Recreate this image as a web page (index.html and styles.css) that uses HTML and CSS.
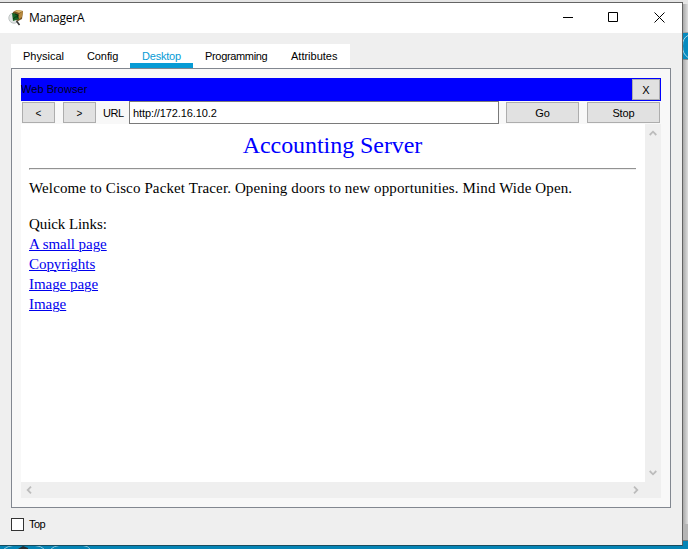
FILE: index.html
```html
<!DOCTYPE html>
<html lang="en">
<head>
<meta charset="utf-8">
<title>ManagerA</title>
<link rel="stylesheet" href="styles.css">
</head>
<body>
<svg class="backdrop" width="688" height="549" viewBox="0 0 688 549">
  <defs><linearGradient id="shade"><stop offset="0" stop-color="#a9a9a9"/><stop offset="1" stop-color="#dedede"/></linearGradient></defs>
  <rect width="688" height="549" fill="#e5e5e5"/>
  <rect x="683" y="4" width="5" height="545" fill="url(#shade)"/>
  <rect x="683" y="32" width="5" height="1" fill="#a0a0a0"/>
  <rect x="683" y="33" width="5" height="26" fill="#078bbf"/>
  <path d="M688 35.5Q682.5 38 682.5 46T688 57.5" fill="none" stroke="#a8d4e5"/>
  <rect x="683" y="59" width="5" height="1" fill="#858b8e"/>
  <rect x="683" y="524" width="5" height="16" fill="#b5b5b5"/>
  <rect x="683" y="540" width="5" height="1" fill="#777"/>
  <path d="M683 541h5v8H0v-4h683z" fill="#0584b5"/>
  <path d="M4 549Q8 546 13 545.500M35 545.500Q41 546 44 549M51 549Q54 546 59 545.500M83 545.500Q88 546 90 549" fill="none" stroke="#8dc5db"/>
  <path d="M18 549l5-3 5 2v1z" fill="#252d31"/>
</svg>
<main class="window">
  <header class="titlebar">
    <svg class="app-icon" width="17" height="17" viewBox="0 0 17 17">
      <circle cx="6" cy="9" r="5.200" fill="#e2e5e4" stroke="#bfc4c4"/>
      <path d="M5 3l4-2 6 1-1 8-4 2-5-2z" fill="#765321"/>
      <path d="M6 2l4-1 5 1-4 2z" fill="#dbb568"/>
      <path d="M11 5l4-3-1 6-3 2z" fill="#b88a3e"/>
      <path d="M4 4l5 1 2 5-6 2z" fill="#176526"/>
      <path d="M5 10l5-4M7 5l3 1-1 3" fill="none" stroke="#073b12"/>
      <path d="M8.500 12l3 4" stroke="#353535" stroke-width="1.600"/>
    </svg>
    <h1 class="title">ManagerA</h1>
    <svg class="controls" width="104" height="12" viewBox="0 0 104 12" fill="none" stroke="#000">
      <path d="M0 6.500h10M45.500 1.500h9v9h-9zM91.500 1.500l10 10M101.500 1.500l-10 10"/>
    </svg>
  </header>
  <nav class="tabs">
    <span class="tab physical">Physical</span><span class="tab config">Config</span><span class="tab active">Desktop</span><span class="tab programming">Programming</span><span class="tab attributes">Attributes</span>
  </nav>
  <section class="panel">
    <div class="browser-title"><span>Web Browser</span><button class="close">X</button></div>
    <div class="toolbar">
      <button class="nav-button">&lt;</button><button class="nav-button forward">&gt;</button>
      <label class="url-label">URL</label><div class="url">http://172.16.10.2</div>
      <button class="action">Go</button><button class="action stop">Stop</button>
    </div>
    <div class="viewport">
      <article class="page">
        <h2><span>Accounting Server</span></h2>
        <div class="rule"></div>
        <p class="welcome">Welcome to Cisco Packet Tracer. Opening doors to new opportunities. Mind Wide Open.</p>
        <p class="quick">Quick Links:</p>
        <a href="#">A small page</a>
        <a href="#">Copyrights</a>
        <a href="#">Image page</a>
        <a href="#">Image</a>
      </article>
      <div class="scroll vertical">
        <svg width="8" height="6" viewBox="0 0 8 6"><path d="M.7 5L4 1.700 7.300 5"/></svg>
        <svg width="8" height="6" viewBox="0 0 8 6"><path d="M.7 1L4 4.300 7.300 1"/></svg>
      </div>
      <div class="scroll horizontal">
        <svg width="6" height="8" viewBox="0 0 6 8"><path d="M5 .7L1.700 4 5 7.300"/></svg>
        <svg width="6" height="8" viewBox="0 0 6 8"><path d="M1 .7L4.300 4 1 7.300"/></svg>
      </div>
    </div>
  </section>
  <footer class="footer"><span class="checkbox"></span><span class="top-label">Top</span></footer>
</main>
</body>
</html>
```
FILE: styles.css
```css
* { box-sizing: border-box; }
body {
  display: flow-root;
  margin: 0;
  width: 688px;
  height: 549px;
  overflow: hidden;
  font: 11px/13px "Liberation Sans", Arial, sans-serif;
  color: #000;
}
.backdrop { position: absolute; left: 0; top: 0; z-index: -1; }
.window {
  width: 683px;
  height: 544px;
  margin-top: 2px;
  border: solid #646464;
  border-width: 1px 1px 1px 0;
  border-bottom-color: #174d60;
  background: #efefef;
  display: flow-root;
}
.titlebar { height: 30px; background: #fff; display: flex; align-items: flex-start; }
.app-icon { margin: 6px 0 0 8px; }
.title { margin: 7px 0 0 4px; font: 12px/16px "Open Sans", "Noto Sans", sans-serif; letter-spacing: -.25px; }
.controls { margin: 8px 15px 0 auto; }
.tabs { margin: 11px 0 0 11px; height: 24px; width: 339px; background: #fff; display: flex; }
.tab { height: 24px; padding: 6px 0 0 12px; white-space: nowrap; }
.physical { width: 64px; }
.config { width: 55px; letter-spacing: -.1px; }
.active { width: 63px; color: #079bd5; border-bottom: 5px solid #079bd5; letter-spacing: -.2px; }
.programming { width: 86px; letter-spacing: -.33px; }
.attributes { width: 71px; }
.panel { width: 660px; height: 440px; margin-left: 11px; padding: 9px; border: 1px solid #828790; background: #f8f8f8; }
.browser-title { width: 640px; height: 23px; padding: 1px 1px 1px 0; background: #00f; display: flex; justify-content: space-between; color: #000023; }
.browser-title span { margin-top: 4px; letter-spacing: .05px; }
button { padding: 1px 0 0; border: 1px solid #adadad; background: #e1e1e1; border-radius: 0; font: 11px/13px "Liberation Sans", Arial, sans-serif; color: #000; }
.close { width: 28px; height: 21px; }
.toolbar { display: flex; align-items: flex-start; height: 23px; padding-left: 1px; }
.nav-button { width: 33px; height: 21px; margin-top: 1px; padding-top: 2px; font-size: 10px; }
.forward { margin-left: 8px; }
.url-label { margin: 6px 0 0 7px; width: 26px; letter-spacing: -.5px; }
.url { width: 370px; height: 23px; border: 1px solid #7a7a7a; background: #fff; padding: 5px 3px; letter-spacing: -.1px; }
.action { width: 73px; height: 21px; margin: 1px 0 0 7px; padding-top: 2px; letter-spacing: -.1px; }
.stop { margin-left: 8px; }
.viewport { width: 640px; height: 374px; display: grid; grid-template: 358px 16px / 624px 16px; background: #efefef; }
.page { background: #fff; padding: 7px 9px 0 8px; font: 15px/20px "Liberation Serif", "Times New Roman", serif; }
.page h2 { margin: 0; height: 37px; color: #00f; font-weight: normal; font-size: 24px; line-height: 29px; text-align: center; letter-spacing: -.06px; }
.rule { height: 2px; border-top: 1px solid #929292; border-left: 1px solid #929292; border-bottom: 1px solid #eee; }
.page p { margin: 0; white-space: nowrap; }
.page .welcome { padding-top: 8px; letter-spacing: .12px; }
.page .quick { margin-top: 16px; letter-spacing: -.08px; }
.page a { display: block; width: max-content; color: #00e; letter-spacing: -.05px; text-underline-offset: 1px; text-decoration-thickness: 1px; }
.scroll { display: flex; justify-content: space-between; align-items: center; }
.scroll path { fill: none; stroke: #bcbcbc; stroke-width: 1.8; }
.vertical { flex-direction: column; padding: 6px 0; }
.horizontal { padding: 0 6px 0 5px; }
.footer { display: flex; margin: 9px 0 0 11px; align-items: center; gap: 5px; }
.top-label { padding-top: 1px; letter-spacing: -.5px; }
.checkbox { width: 13px; height: 13px; border: 1px solid #333; background: #fff; }
```
